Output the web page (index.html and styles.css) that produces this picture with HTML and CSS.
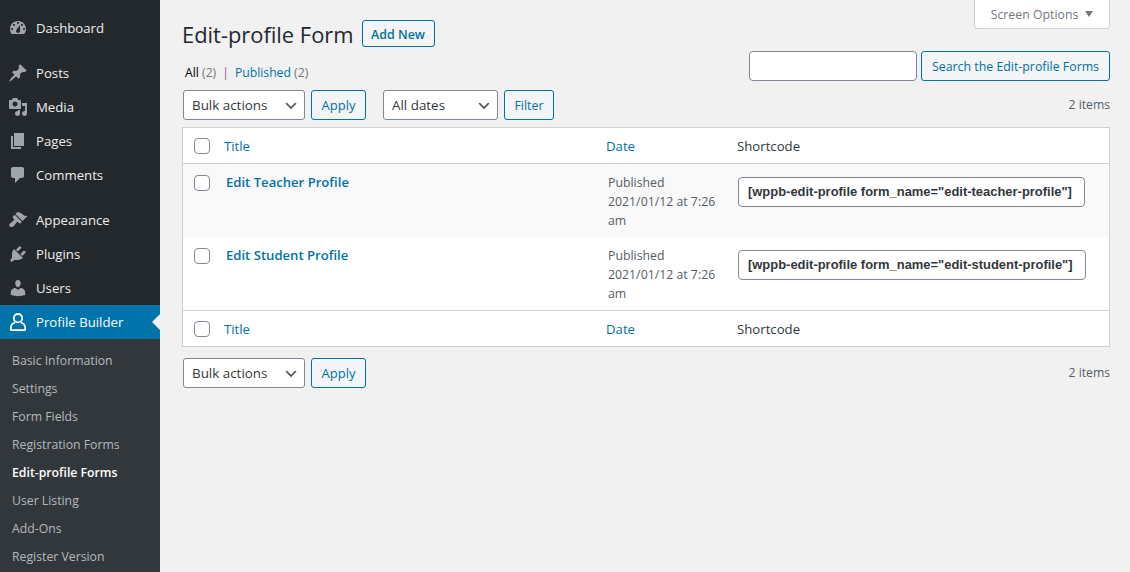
FILE: index.html
```html
<!DOCTYPE html>
<html lang="en">
<head>
<meta charset="utf-8">
<title>Edit-profile Forms</title>
<link rel="stylesheet" href="styles.css">
</head>
<body>
<div class="app">
  <nav class="sidebar">
    <ul class="menu">
      <li class="item"><svg class="ico" viewBox="0 0 20 20"><path fill-rule="evenodd" d="M3.76 16h12.48c1.1-1.37 1.76-3.11 1.76-5 0-4.42-3.58-8-8-8s-8 3.58-8 8c0 1.89.66 3.63 1.76 5zM10 4c.55 0 1 .45 1 1s-.45 1-1 1-1-.45-1-1 .45-1 1-1zM6 6c.55 0 1 .45 1 1s-.45 1-1 1-1-.45-1-1 .45-1 1-1zm8 0c.55 0 1 .45 1 1s-.45 1-1 1-1-.45-1-1 .45-1 1-1zm-5.37 5.55L12 7v6c0 1.1-.9 2-2 2s-2-.9-2-2c0-.57.24-1.08.63-1.45zM4 10c.55 0 1 .45 1 1s-.45 1-1 1-1-.45-1-1 .45-1 1-1zm12 0c.55 0 1 .45 1 1s-.45 1-1 1-1-.45-1-1 .45-1 1-1z"/></svg>Dashboard</li>
      <li class="item sep"><svg class="ico" viewBox="0 0 20 20"><path d="M10.44 3.02l1.82-1.82 6.36 6.35-1.83 1.82c-1.05-.68-2.48-.57-3.41.36l-.75.75c-.92.93-1.04 2.35-.35 3.41l-1.83 1.82-2.41-2.41-2.8 2.79c-.42.42-3.38 2.71-3.8 2.29s1.86-3.39 2.28-3.81l2.79-2.79L4.1 9.36l1.83-1.82c1.05.69 2.48.57 3.4-.36l.75-.75c.93-.92 1.05-2.35.36-3.41z"/></svg>Posts</li>
      <li class="item"><svg class="ico" viewBox="0 0 20 20"><path fill-rule="evenodd" d="M13 11V4c0-.55-.45-1-1-1h-1.67L9 1H5L3.67 3H2c-.55 0-1 .45-1 1v7c0 .55.45 1 1 1h10c.55 0 1-.45 1-1zM7 4.5c1.38 0 2.5 1.12 2.5 2.5S8.38 9.5 7 9.5 4.5 8.38 4.5 7 5.62 4.5 7 4.5zM14 6h5v10.5c0 1.38-1.12 2.5-2.5 2.5S14 17.88 14 16.5s1.12-2.5 2.5-2.5c.17 0 .34.02.5.05V9h-3V6zm-4 8.05V13h2v3.5c0 1.38-1.12 2.5-2.5 2.5S7 17.88 7 16.5 8.12 14 9.5 14c.17 0 .34.02.5.05z"/></svg>Media</li>
      <li class="item"><svg class="ico" viewBox="0 0 20 20"><path d="M6 15V2h10v13H6zm-1 1h8v2H3V5h2v11z"/></svg>Pages</li>
      <li class="item"><svg class="ico" viewBox="0 0 20 20"><path d="M5 2h9c1.1 0 2 .9 2 2v7c0 1.1-.9 2-2 2h-2l-5 5v-5H5c-1.1 0-2-.9-2-2V4c0-1.1.9-2 2-2z"/></svg>Comments</li>
      <li class="item sep"><svg class="ico" viewBox="0 0 20 20"><path d="M14.48 11.06L7.41 3.99l1.5-1.5c.5-.56 2.3-.47 3.51.32 1.21.8 1.43 1.28 2.91 2.1 1.18.64 2.45 1.26 4.45.85zm-.71.71L6.7 4.7 4.93 6.47c-.39.39-.39 1.02 0 1.41l1.06 1.06c.39.39.39 1.03 0 1.42-.6.6-1.43 1.11-2.21 1.69-.35.26-.7.53-1.01.84C1.43 13.23.4 14.99 1.79 16.38c1.39 1.39 3.15.36 4.49-.99.3-.3.58-.65.84-.99.58-.78 1.09-1.61 1.69-2.21.39-.39 1.02-.39 1.41 0l1.06 1.06c.39.39 1.02.39 1.41 0z"/></svg>Appearance</li>
      <li class="item"><svg class="ico" viewBox="0 0 20 20"><path d="M13.11 4.36L9.87 7.6 8 5.73l3.24-3.24c.35-.34 1.05-.2 1.56.32.52.51.66 1.21.31 1.55zm-8 1.77l.91-1.12 9.01 9.01-1.19.84c-.71.71-2.63 1.16-3.82 1.16H6.14L4.9 17.26c-.59.59-1.54.59-2.12 0-.59-.58-.59-1.53 0-2.12l1.24-1.24v-3.88c0-1.13.4-3.19 1.09-3.89zm7.26 3.97l3.24-3.24c.34-.35 1.04-.21 1.55.31.52.51.66 1.21.31 1.55l-3.24 3.25z"/></svg>Plugins</li>
      <li class="item"><svg class="ico" viewBox="0 0 20 20"><path d="M10 9.25c-2.27 0-2.73-3.44-2.73-3.44C7 4.02 7.82 2 9.97 2c2.16 0 2.98 2.02 2.71 3.81 0 0-.41 3.44-2.68 3.44zm0 2.57L12.72 10c2.39 0 4.52 2.33 4.52 4.53v2.49s-3.65 1.13-7.24 1.13c-3.65 0-7.24-1.13-7.24-1.13v-2.49c0-2.25 1.94-4.48 4.47-4.48z"/></svg>Users</li>
      <li class="item active"><svg class="ico" viewBox="0 0 20 20"><circle class="outline" cx="10" cy="6.2" r="4.2"/><path class="outline" d="M7 10.5C4.5 11.2 2.8 13.3 2.8 16.2v1.2c0 .5.3.8.8.8h12.8c.5 0 .8-.3.8-.8v-1.2c0-2.9-1.7-5-4.2-5.7"/></svg>Profile Builder</li>
    </ul>
    <ul class="submenu">
      <li>Basic Information</li>
      <li>Settings</li>
      <li>Form Fields</li>
      <li>Registration Forms</li>
      <li class="current">Edit-profile Forms</li>
      <li>User Listing</li>
      <li>Add-Ons</li>
      <li>Register Version</li>
    </ul>
  </nav>

  <main class="main">
    <div class="top">
      <div class="top-left">
        <div class="heading">
          <h1>Edit-profile Form</h1>
          <a class="btn add-new">Add New</a>
        </div>
        <div class="views"><b>All</b> <span class="count">(2)</span><span class="pipe">|</span><a>Published</a> <span class="count">(2)</span></div>
      </div>
      <div class="top-right">
        <div class="screen-options">Screen Options<span class="caret"></span></div>
        <div class="search">
          <input class="search-input" type="text" aria-label="Search">
          <a class="btn search-btn">Search the Edit-profile Forms</a>
        </div>
      </div>
    </div>

    <div class="tablenav">
      <select class="sel bulk"><option>Bulk actions</option></select>
      <a class="btn apply">Apply</a>
      <select class="sel dates"><option>All dates</option></select>
      <a class="btn filter">Filter</a>
      <span class="items">2 items</span>
    </div>

    <table class="list">
      <colgroup><col class="c-cb"><col class="c-title"><col class="c-date"><col class="c-code"></colgroup>
      <thead>
        <tr><th class="cb"><span class="check"></span></th><th><a>Title</a></th><th><a>Date</a></th><th class="plain">Shortcode</th></tr>
      </thead>
      <tbody>
        <tr class="alt">
          <td class="cb"><span class="check"></span></td>
          <td class="name"><a>Edit Teacher Profile</a></td>
          <td class="date">Published<br>2021/01/12 at 7:26 am</td>
          <td class="code-cell"><span class="code">[wppb-edit-profile form_name="edit-teacher-profile"]</span></td>
        </tr>
        <tr>
          <td class="cb"><span class="check"></span></td>
          <td class="name"><a>Edit Student Profile</a></td>
          <td class="date">Published<br>2021/01/12 at 7:26 am</td>
          <td class="code-cell"><span class="code">[wppb-edit-profile form_name="edit-student-profile"]</span></td>
        </tr>
      </tbody>
      <tfoot>
        <tr><th class="cb"><span class="check"></span></th><th><a>Title</a></th><th><a>Date</a></th><th class="plain">Shortcode</th></tr>
      </tfoot>
    </table>

    <div class="tablenav bottom">
      <select class="sel bulk"><option>Bulk actions</option></select>
      <a class="btn apply">Apply</a>
      <span class="items">2 items</span>
    </div>
  </main>
</div>
</body>
</html>
```

FILE: styles.css
```css
* { box-sizing: border-box; }
html, body { margin: 0; height: 100%; }
body {
  background: #f1f1f1;
  color: #444;
  font-family: "Open Sans", "Liberation Sans", sans-serif;
  font-size: 13px;
  overflow: hidden;
}
ul { list-style: none; margin: 0; padding: 0; }
a { color: #0073aa; text-decoration: none; }

.app { display: flex; height: 572px; }

.sidebar { width: 160px; flex: none; background: #23282d; padding-top: 11px; }
.item {
  position: relative;
  display: flex;
  align-items: center;
  height: 34px;
  padding-left: 8px;
  color: #eee;
  font-size: 13.2px;
}
.item.sep { margin-top: 11px; }
.ico { width: 20px; height: 20px; margin-right: 8px; fill: #a0a5aa; flex: none; }
.item.active { background: #0073aa; color: #fff; }
.item.active .ico { fill: none; }
.outline { fill: none; stroke: #fff; stroke-width: 1.8; }
.item.active::after {
  content: "";
  position: absolute;
  right: 0;
  top: 9px;
  border: 8px solid transparent;
  border-right-color: #f1f1f1;
  border-left-width: 0;
}
.submenu { background: #32373c; padding: 8px 0 6px; height: 233px; }
.submenu li {
  height: 28px;
  line-height: 28px;
  padding-left: 12px;
  color: #b4b9be;
  font-size: 12.25px;
}
.submenu li.current { color: #fff; font-weight: 600; }

.main { flex: 1; min-width: 0; padding: 0 20px 0 23px; }

.top { display: flex; justify-content: space-between; height: 90px; }
.heading { display: flex; align-items: center; margin-top: 20px; height: 27px; }
h1 { margin: 0 8px 0 -1px; padding-top: 2px; font-size: 21.9px; font-weight: 400; color: #23282d; line-height: 27px; }
.views { margin: 17px 0 0 2px; font-size: 12.2px; line-height: 18px; color: #555d66; }
.views b { color: #000; font-weight: 400; }
.count { color: #72777c; }
.pipe { color: #8a5a9a; margin: 0 6px; }

.top-right { display: flex; flex-direction: column; align-items: flex-end; }
.screen-options {
  display: flex;
  align-items: center;
  justify-content: center;
  width: 136px;
  height: 29px;
  background: #fff;
  border: 1px solid #ccd0d4;
  border-top: 0;
  border-radius: 0 0 4px 4px;
  color: #72777c;
  font-size: 12.3px;
}
.caret {
  margin-left: 7px;
  border: 4.5px solid transparent;
  border-top: 6px solid #72777c;
  border-bottom: 0;
}
.search { display: flex; gap: 4px; margin-top: 22px; }
.search-input {
  width: 168px;
  height: 30px;
  background: #fff;
  border: 1px solid #7e8993;
  border-radius: 4px;
  padding: 0;
}

.btn {
  display: inline-flex;
  align-items: center;
  justify-content: center;
  height: 30px;
  background: #f3f5f6;
  border: 1px solid #0071a1;
  border-radius: 3px;
  color: #0071a1;
  font-size: 12.35px;
}
.add-new { width: 73px; height: 27px; padding-top: 1px; font-weight: 600; font-size: 12.4px; }
.search-btn { width: 189px; }
.apply { width: 55px; margin-left: 6px; font-size: 13px; }
.filter { width: 50px; margin-left: 6px; }

.tablenav { display: flex; align-items: center; height: 30px; }
.sel {
  appearance: none;
  -webkit-appearance: none;
  height: 30px;
  padding: 0 24px 0 8px;
  background: #fff url("data:image/svg+xml,%3Csvg xmlns='http://www.w3.org/2000/svg' width='20' height='20'%3E%3Cpath d='M5 6l5 5 5-5 2 1-7 7-7-7z' fill='%23555'/%3E%3C/svg%3E") no-repeat right 5px top 55% / 16px 16px;
  border: 1px solid #7e8993;
  border-radius: 3px;
  color: #32373c;
  font-family: inherit;
  font-size: 13.4px;
}
.bulk { width: 122px; }
.dates { width: 115px; margin-left: 17px; }
.items { margin-left: auto; color: #555d66; font-size: 12.2px; padding-bottom: 2px; }

.list {
  width: 928px;
  margin: 7px 0 0 -1px;
  border: 1px solid #ccd0d4;
  border-collapse: separate;
  border-spacing: 0;
  table-layout: fixed;
  background: #fff;
}
.c-cb { width: 33px; }
.c-title { width: 382px; }
.c-date { width: 131px; }
th { height: 36px; padding: 0 0 0 8px; font-weight: 400; text-align: left; font-size: 13.2px; border-bottom: 1px solid #ccd0d4; }
tfoot th { border-bottom: 0; border-top: 1px solid #ccd0d4; height: 36px; }
th.cb, td.cb { padding: 0 0 0 11px; }
.plain { color: #32373c; }
.check {
  display: block;
  width: 16px;
  height: 16px;
  background: #fff;
  border: 1px solid #7e8993;
  border-radius: 4px;
}
td { height: 73px; vertical-align: top; padding: 10px 10px 0; }
td.cb { padding-top: 11px; }
.alt { background: #f9f9f9; }
.name { font-size: 13.1px; font-weight: 600; line-height: 18px; padding-top: 9px; }
.date { color: #555d66; font-size: 12.3px; line-height: 19px; padding-top: 9px; }
.code-cell { padding: 13px 0 0 9px; }
.code {
  display: inline-block;
  height: 30px;
  line-height: 28px;
  padding: 0 12px 0 9px;
  background: #fff;
  border: 1px solid #7e8993;
  border-radius: 4px;
  color: #32373c;
  font-family: "Liberation Sans", Arial, sans-serif;
  font-size: 12.95px;
  font-weight: 700;
  white-space: nowrap;
}
.bottom { margin-top: 11px; }
```
